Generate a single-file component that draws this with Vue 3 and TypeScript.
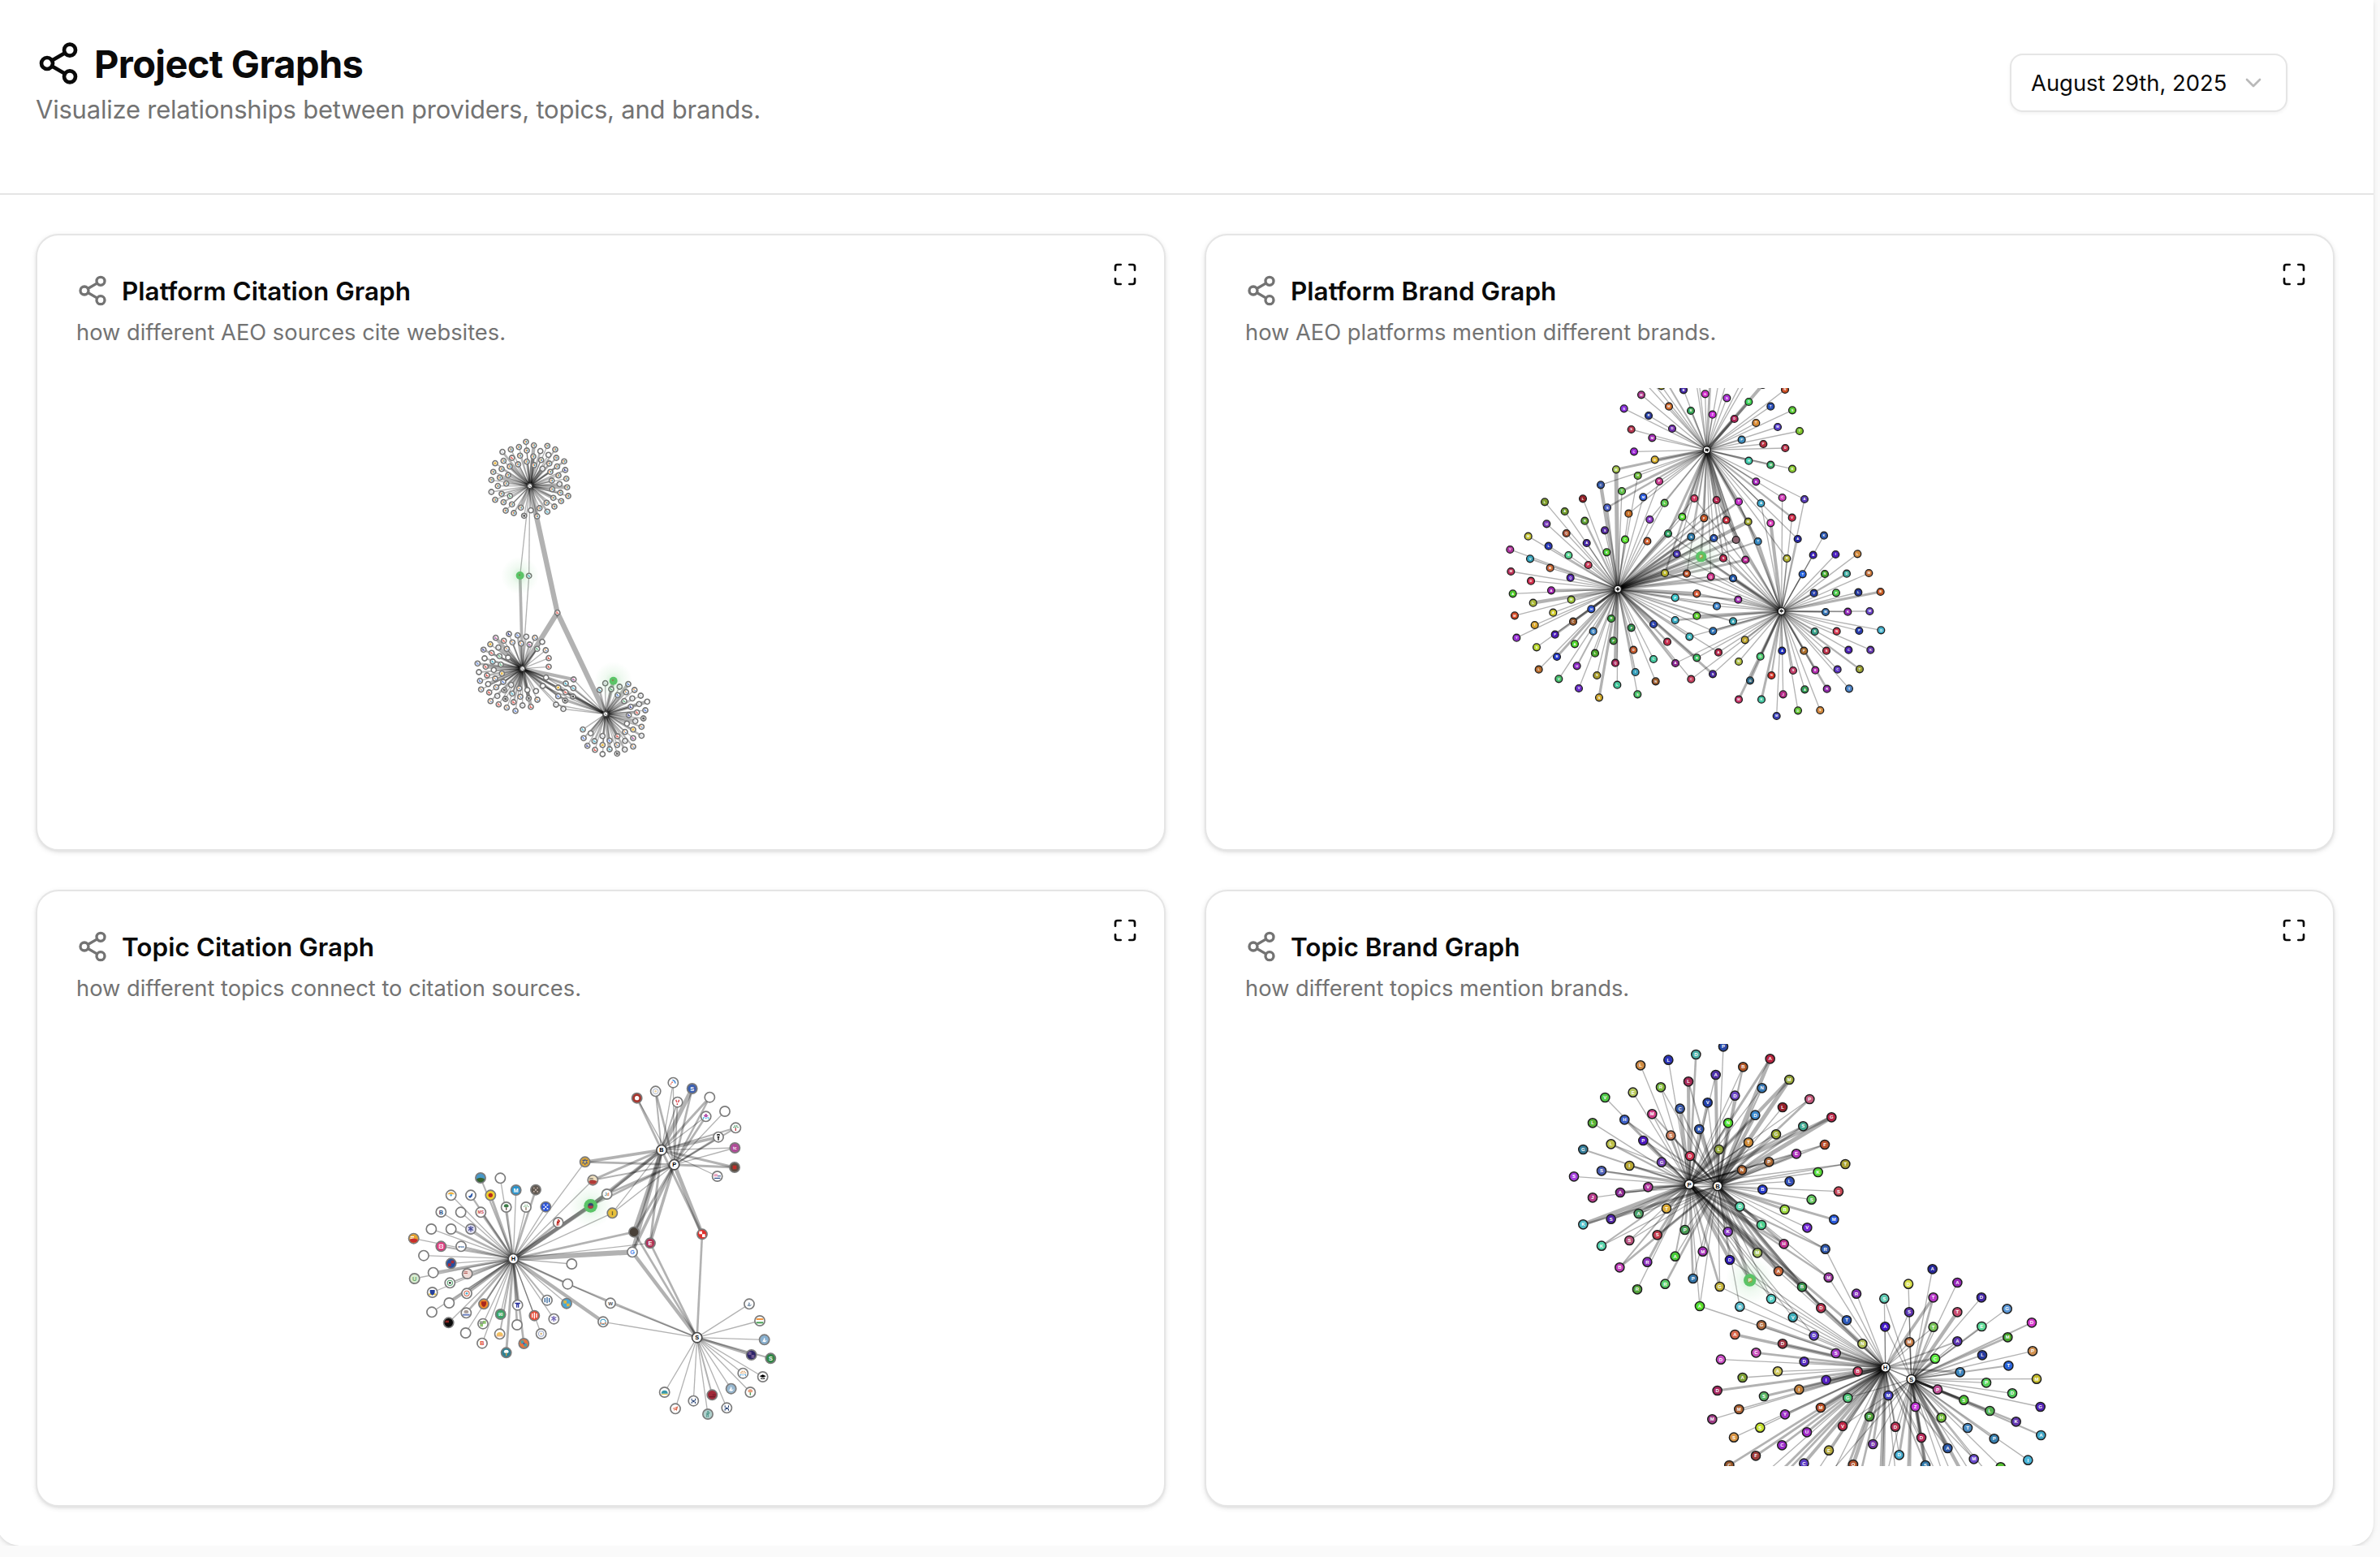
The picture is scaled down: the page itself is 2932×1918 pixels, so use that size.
<script setup lang="ts">
interface Mark {
  d: string
  fill: string
}
interface GraphNode {
  x: number
  y: number
  fill: string
  ink: string
  label: string
  marks: Mark[]
  specks: string[]
  kind: 'hub' | 'leaf' | 'active'
}
interface GraphLink {
  x1: number
  y1: number
  x2: number
  y2: number
  w: number
}
interface Graph {
  id: string
  title: string
  description: string
  offset: [number, number]
  radius: number
  border: number
  ring: string
  font: number
  activeRadius: number
  glow: number
  nodes: GraphNode[]
  links: GraphLink[]
}
type Hubs = Record<string, [number, number]>

// Link spec: hub letter followed by an optional stroke width, e.g. "A8B".
function linksFor(x: number, y: number, spec: string, hubs: Hubs, fallback: number): GraphLink[] {
  return [...spec.matchAll(/([A-Z])(\d*)/g)].map((m) => ({
    x1: hubs[m[1]][0],
    y1: hubs[m[1]][1],
    x2: x,
    y2: y,
    w: m[2] ? Number(m[2]) : fallback,
  }))
}

function rows(raw: string): string[][] {
  return raw.trim().split(/\s+/).map((r) => r.split(','))
}

function leaf(x: number, y: number, extra: Partial<GraphNode>): GraphNode {
  return { x, y, fill: '#fff', ink: '#fff', label: '', marks: [], specks: [], kind: 'leaf', ...extra }
}

/* ---------- platform citations ---------- */
const speckSets: Record<string, string[]> = {
  g: ['#ea6a5e', '#f0c14b', '#4a86f0', '#5fb27a'],
  b: ['#3b66c8', '#8fb0f0', '#5a80d8'],
  r: ['#e23c30', '#d86a60', '#e25048'],
  o: ['#ef8a2c', '#e8d0b8', '#5a8fd8'],
  y: ['#f0b428', '#d8a020', '#e8bc40', '#f0b428'],
  n: ['#23307a', '#4a50a0', '#5058a8'],
  k: ['#333333', '#555555', '#333333', '#444444'],
  t: ['#3aa5c0', '#7cc8dc', '#3aa5c0'],
  p: ['#d0508c', '#5a60b8', '#d0508c'],
  e: ['#3c9c62', '#88cca0', '#5cac7c'],
  w: [],
  s: ['#c8ccd8', '#d8dce0', '#d0d4d8'],
}
const citeHubs: Hubs = { T: [278, 236], L: [251, 911], R: [558, 1079] }
const citeClusters: Record<string, string> = {
  T: `264,73,g 177,110,s 208,101,g 238,92,g 293,86,g 343,88,g 372,101,g 267,105,g 317,107,w 212,132,r 242,124,g 291,127,g 347,121,w 376,132,g
181,143,g 267,146,g 320,140,g 150,152,y 204,164,g 235,156,g 294,159,g 350,153,g 405,145,g 379,164,g 174,173,g 325,172,s 354,184,g 409,177,n
143,184,g 198,196,g 384,197,g 136,214,g 167,205,g 191,227,g 359,216,g 413,209,g 388,229,s 160,236,g 361,248,g 416,241,g 136,258,s 174,265,g
205,273,e 391,261,g 420,273,g 150,287,g 365,280,g 394,292,g 181,296,g 212,304,g 340,298,g 369,312,g 189,327,g 245,316,g 314,318,g 219,336,g
282,326,w 343,331,t 257,346,k 305,348,g`,
  L: `201,783,n 233,788,b 265,793,s 297,797,o 152,797,p 182,808,r 214,814,o 246,818,o 277,822,p 324,812,w 132,821,y 162,833,s 193,838,o 305,838,e
337,843,o 107,841,n 137,853,r 166,865,e 198,870,w 348,872,r 111,873,w 141,885,t 85,892,b 171,896,e 348,904,r 115,904,r 145,916,w 90,924,w
175,929,y 120,936,r 150,948,o 94,956,b 124,968,w 180,960,b 209,971,s 98,988,o 154,980,o 184,991,k 128,999,r 239,984,o 269,990,w 301,994,w
158,1012,s 213,1003,t 188,1023,k 243,1015,o 274,1021,k 306,1026,o 133,1031,o 163,1043,r 218,1035,r 193,1055,o 251,1047,s 282,1052,r 225,1067,b`,
  R: `557,965,s 536,990,t 579,987,e 610,978,s 642,968,b 603,1009,b 634,998,o 665,990,o 627,1031,e 657,1021,s 688,1011,s 712,1033,w 682,1042,s
651,1052,n 705,1065,b 674,1073,r 644,1083,n 698,1095,k 668,1105,s 637,1114,w 691,1126,o 660,1136,y 691,1159,s 630,1145,o 660,1168,p 602,1161,r
630,1178,s 660,1199,o 601,1193,o 629,1210,s 601,1225,k 573,1177,b 573,1209,t 547,1160,s 547,1193,y 547,1227,w 517,1179,t 519,1211,r 491,1196,n
503,1150,w 474,1136,t 477,1168,b`,
}
const citeShared = `440,951,p,L13R 411,966,t,L6R 439,983,t,L6R6 383,981,y,LR6 410,998,r,L9R9 437,1014,k,L7R9 383,1013,b,L6R 409,1029,k,L9R6
375,1044,s,LR 402,1060,s,LR 338,944,w,L7R 326,975,w,L5R5 275,568,t,TL 380,704,r,T19L19R19`

function buildCitation(): Pick<Graph, 'nodes' | 'links'> {
  const nodes: GraphNode[] = []
  const links: GraphLink[] = []
  const widths = [4, 8, 4, 4, 13, 4, 6]
  for (const [hub, raw] of Object.entries(citeClusters)) {
    rows(raw).forEach(([xs, ys, s], i) => {
      links.push(...linksFor(+xs, +ys, hub, citeHubs, widths[i % widths.length]))
      nodes.push(leaf(+xs, +ys, { specks: speckSets[s] }))
    })
  }
  for (const [xs, ys, s, l] of rows(citeShared)) {
    links.push(...linksFor(+xs, +ys, l, citeHubs, 4))
    nodes.push(leaf(+xs, +ys, { specks: speckSets[s] }))
  }
  links.push(...linksFor(242, 567, 'TL11', citeHubs, 4), ...linksFor(587, 956, 'R13', citeHubs, 4))
  for (const [x, y] of Object.values(citeHubs)) nodes.push(leaf(x, y, { specks: ['#999', '#bbb', '#888'], kind: 'hub' }))
  nodes.push(leaf(242, 567, { specks: ['#a04a3c'], kind: 'active' }), leaf(587, 956, { specks: ['#c03a3a'], kind: 'active' }))
  return { nodes, links }
}

/* ---------- brand graphs: coloured discs with an initial ---------- */
function buildBrand(parts: { raw: string; dx: number; dy: number }[], hubs: Hubs, hubLabels: Record<string, string>, hubGlyphs: Record<string, string>) {
  const nodes: GraphNode[] = []
  const links: GraphLink[] = []
  for (const { raw, dx, dy } of parts) {
    for (const [xs, ys, color, label, l] of rows(raw)) {
      const x = +xs + dx
      const y = +ys + dy
      links.push(...linksFor(x, y, l || '', hubs, 4))
      if (color === '-') continue
      const active = color === '*'
      nodes.push(leaf(x, y, { fill: active ? '#b09a3c' : '#' + color, label, kind: active ? 'active' : 'leaf' }))
    }
  }
  for (const [k, [x, y]] of Object.entries(hubs)) {
    nodes.push(leaf(x, y, { ink: '#111', label: hubLabels[k] || '', marks: hubGlyphs[k] ? [{ d: hubGlyphs[k], fill: '#111' }] : [], kind: 'hub' }))
  }
  nodes.sort((a, b) => Number(a.kind === 'active') - Number(b.kind === 'active'))
  return { nodes, links }
}

const platformBrandHubs: Hubs = { A: [788, 283], B: [459, 797], C: [1064, 879] }
const platformBrandRaw = `620,46,a6a82c,,A 702,61,4428a8,B,A 782,76,d02cc8,G,A 862,91,b034d8,S,A 995,42,1f2a78,,A12 1077,60,cc4e24,N,A
546,79,b03a90,M,A 648,122,cf6a2c,M,A 729,138,38a858,B,A6 809,152,c82cd8,Z,A 943,105,3ccf54,D,A9 890,168,b02458,D,A9 1024,122,2850b8,T,A
1104,136,58c832,S,A 482,130,8a32dc,S,A 573,156,283ca0,R,A 660,204,7430b0,D,A 970,183,d88a34,T,A 1050,198,5a3ed0,M,A 1131,213,7cc42c,T,A
509,207,b83450,S,A 586,238,a22cb4,M,A 917,245,3c8cbc,P,A 997,261,b43040,F,A 1078,276,b83048,D,A 519,289,9a24d4,C,A 596,319,d8b02c,D,A9
943,323,3cc8a8,H,A 1024,338,3cb06c,M,A6 1104,353,8ccc34,E,A 453,355,a4c44c,M,A9B15 533,378,68b434,H,AB 612,399,cc3c90,F,AB
396,412,3458a8,C,AB13 474,435,62c04c,T,A9B 553,457,2c5ce0,M,AB 632,479,5cc84c,L,AB 420,496,4c60c4,S,A7B6 499,518,c46c24,I,AB 577,540,8a38c8,K,AB
970,400,a424b8,K,A 1067,459,d03cb8,C,AC 1149,465,5a3cb8,A,AC 988,480,3ca4c8,A,AC 1103,533,cc2848,V,A7C 1024,553,d83cbc,E,AC12
742,462,d43860,T,A7BC 824,468,b42850,L,A13BC 906,474,c42cc8,T,A9B8C 697,530,52d82c,M,A9BC 778,535,c45828,F,AB6 860,542,c42c3c,A,A14B7C
941,548,9ca42c,M,A6B13C6 645,592,2c9c5c,R,A9B13C 730,604,2c78a8,S,AB9 814,609,2850b0,K,AB6C 896,615,8c6470,,A13B11C6 977,621,3484bc,T,A9B6C8
1124,612,2828a8,A,AC 1221,599,2c58b0,K,C 189,475,7c9c2c,L,B 330,463,942028,L,B 263,510,6c982c,A,B 337,545,5c9c30,R,B7 411,580,5428a0,S,B
196,556,7838b8,U,B 269,591,a85030,Q,B 486,614,58e02c,C,B 568,620,cc5c2c,A,B 128,602,c4c434,M,B 203,638,2838b8,L,B 344,627,4828a4,A,B
418,661,48c82c,K,B 277,672,54d490,E,B 61,651,b034a0,V,B 135,685,34a4bc,V,B6 350,708,c83c58,F,B 209,719,cc6838,B,B 284,755,5424b4,Q,B
64,732,bc3058,M,B 138,767,d42c4c,D,B 213,802,a024b0,A,B9 71,814,4cc82c,A,B 146,848,a8b838,L,B13 287,836,9cc438,M,B 78,895,d44c28,M,B
220,884,ccc82c,A,B 361,871,2c50cc,H,B9 294,917,98582c,C,B9 152,930,d8a42c,T,B 227,965,4c1cb8,P,B9 85,977,9830d4,Y,B 159,1012,b8d82c,S,B
368,953,3c84c4,Q,B6 300,1000,50d82c,A,B6 234,1047,2438cc,B,B9 167,1094,b86c2c,L,B 375,1034,48a828,L,B 308,1081,8c28c4,U,B6 241,1129,48c06c,V,B
382,1116,a89c2c,S,B 315,1164,6c2ccc,V,B 390,1198,d0a82c,S,B10 435,906,3ca03c,R,B 443,988,40983c,P,B6 450,1070,a82458,Q,B13 457,1151,40c498,L,B
509,940,349050,F,B 517,1022,c0582c,D,B 524,1104,349cb8,I,B6 532,1186,48c064,S,B 591,927,2c44b0,L,B6 591,1056,44c8a0,C,B 599,1138,985828,N,B
642,992,c42c4c,T,B7 724,973,3cb4bc,K,B6C 672,1071,8c2890,A,B8C 751,1051,38b85c,R,B7C 730,1130,c43c5c,C,BC 810,1111,4828a0,S,B9C
831,1031,b42848,A,BC 671,829,3cc8cc,P,B6C 751,814,d85c38,A,B13C6 825,860,3c84cc,D,B6C 904,836,9c2cac,M,B6C6 751,896,5ccc2c,S,B6C9
671,912,34a8c0,M,BC7 885,916,34a0b0,A,B6C 811,952,2c70b4,P,BC9 677,667,4430b0,D,AB14C 849,683,bc2850,S,A6B13C 931,689,b42490,H,AB9
633,738,b8b42c,S,A7B15C 714,740,b84c24,M,AB9C 803,751,d0308c,Q,AB7C 885,757,2458a8,A,AB9C14 929,985,bca42c,J,C6 906,1065,b0c044,N,C
986,1046,48c870,G,C8 948,1135,2c6480,G,C8 906,1205,c83468,M,C9 990,1205,44c8a4,K,C9 1027,1116,d03028,N,C6 1066,1025,1c2cb8,A,C 1070,1186,b42c88,J,C
1046,1266,3c40b8,M,C 1107,1098,c03c68,S,C6 1147,1025,a86c2c,P,C 1150,1168,349c54,A,C 1125,1246,64c434,D,C 1207,1245,d4883c,S,C
1189,1097,b02cac,E,C6 1232,1166,9028a8,R,C8 1230,1025,bc3048,S,C 1271,1094,5c34c0,C,C 1314,1165,4c84c8,T,C 1312,1022,4c20b4,C,C
1353,1093,98a034,T,C7 1393,1022,6438b0,K,C 1187,954,349c84,S,C 1268,953,d43850,N,C 1351,951,283cb0,P,C 1432,949,44b4d0,D,C
1227,882,3470b0,M,C6 1309,881,9028b4,K,C 1390,879,6844c8,M,C 1184,812,2840a8,V,C 1266,811,4cc84c,F,C 1348,809,28389c,L,C 1430,807,c45824,B,C9
1142,742,2864dc,T,C 1224,741,44a82c,N,C 1305,740,3ca89c,D,C7 1387,738,c8743c,M,C 1181,671,3c20b4,A,C 1264,669,4c20c0,I,C 1345,667,d0883c,L,C
1084,684,b0b034,R,AC 767,677,*,P,A8B9C9
545,20,-,,A 577,20,-,,A 632,20,-,,A6 747,20,-,,A 758,20,-,,A 801,20,-,,A9 834,20,-,,A 864,20,-,,A 922,20,-,,A 940,20,-,,A`

const topicBrandHubs: Hubs = { P: [483, 567], B: [588, 573], H: [1208, 1244], S: [1304, 1287] }
const topicBrandUpper = `303,127,d08c44,L,P 406,107,2c34b8,L,P 508,87,4cb0a8,D,P8 609,58,2848a8,P,B 682,133,b05424,B,B7P 782,103,b82440,A,B14P9 853,180,98a83c,M,B15P13
275,227,b4c85c,E,P 378,208,7cb83c,R,PB 480,187,a82c58,L,P12B6 581,162,5030a8,A,B12P 172,246,50cc48,V,P 244,328,3c60c8,H,P6B6 346,307,d03c88,M,B6P
449,287,3858a8,C,P13B6 551,265,2440a8,V,BP9 652,239,6c48c4,D,B6P 752,211,3878b4,N,B6P 928,252,c4587c,P,B8P 828,282,98202c,L,B 727,311,3c88cc,D,B13P
627,340,50e02c,N,B9P 126,340,58b438,L,P 313,405,4c18c0,P,P9B 415,386,c87c58,S,P6B7 520,363,2c50a8,K,PB12 1009,319,b82448,G,B16P12 904,352,40a890,S,B8P8
804,382,98a830,G,B6P 702,412,d08c38,T,B14P 593,438,90a43c,L,B9P9 91,438,347c98,G,P6 194,418,bcc048,L,P7B 381,485,7440b8,G,B6P 486,462,cc3050,D,B9P
984,420,b8502c,F,B7P 879,454,b034bc,E,B9P 778,484,a86838,P,B9P 678,514,a86030,N,B6P9 1060,492,a8a030,T,BP 262,498,b8a834,I,P6B 159,517,4c60b8,S,P7B
57,538,a43cdc,S,P 959,522,58dc38,K,B 854,556,3450b8,L,B 754,586,2438c8,B,B 1035,593,c84858,S,B 331,577,b0389c,V,P8B 228,597,8c2c94,A,P9B
126,616,b83c8c,J,P 935,623,60c45c,S,B 836,660,9cd83c,B,B9 670,649,54d4a8,D,B9P 399,656,dcac38,T,P9B 296,675,4ca068,A,P13B 194,695,5024a8,S,P12B7
91,715,50c0c8,K,P15B7 1018,697,2858dc,M,B9 919,727,7428d4,V,B 750,717,4cd090,L,B9P 467,735,489c54,P,P8B 365,754,c03c4c,S,P9B7 262,774,b8507c,S,PB
159,794,54d4ac,K,P6B 626,742,8c3cc8,K,PB6 833,787,c03090,H,P9B9 986,806,3058ac,R,BP7H 735,820,a4c05c,M,B9P12 533,815,a02cb4,M,PB 431,833,48cc38,A,P6B
328,854,8c30bc,R,P9 226,874,c03cb8,B,P6B8 633,846,2c14b4,D,P13BH 813,888,c8683c,A,P13B9H 998,911,9838a0,M,P7BH 497,915,3474a8,P,P8B 394,935,58cc68,R,B8
291,955,54a43c,R,P 900,946,389850,B,B15P9H6 596,945,c4b43c,G,P8BH 786,990,50ccc4,P,BPH 522,1017,54e02c,A,PBH 670,1019,58bccc,B,BH 707,921,*,P,B13P9H`
const topicBrandLower = `621,191,8430b8,R,H 490,244,b83050,D,HB9 585,289,2c58b8,T,HP9 643,376,b0c058,N,H8P9 386,278,3cacb8,V,HP
464,346,6040c8,D,HP 270,307,b06c40,G,H9 172,342,d8684c,A,H11 348,376,a03444,D,H9 250,409,c850bc,C,H8 120,434,c84cc4,D,H 545,411,a840cc,S,H8
428,442,5428bc,D,H7 330,478,ccc458,A,H 200,501,7ca034,A,H 107,549,a82860,D,H9 626,478,c83c60,B,H6 509,510,5420c0,I,H14 409,545,c0803c,I,H14
279,570,58b464,S,H9 187,618,b06434,M,H 88,655,a03c88,M,H 589,576,50c878,G,HS 489,612,b84c24,M,H13 357,637,a034c8,Y,H6 265,686,c4e02c,S,H 168,722,d89444,S,H
570,680,c02848,V,H13S 438,703,a028c8,U,H9 346,751,9828c8,C,H8 249,790,a03c3c,F,H9 151,825,98582c,C,H8 669,645,489c3c,P,H6S8 519,770,b4a83c,E,H8
427,818,5c3cc4,C,H12 682,747,7434a8,D,H9S 609,822,b0502c,O,H14 739,567,4440c0,M,HS 765,683,b83454,D,H6S 779,787,44acd0,D,HS9
839,609,c438d8,Z,HS 861,723,b8285c,D,HS9 876,825,3478a8,S,S14H6 921,545,c05098,P,S9H 1018,584,50c438,S,S9H 1114,624,54b454,L,S9 1211,664,6438b0,K,S7 1303,714,40a8c8,A,S6
935,649,6cb838,H,S9 1032,687,4c8cc4,T,S8 1130,727,3880b0,P,S6 1255,806,48b4d8,I,S 958,762,2c58a8,A,S13H6 1055,802,6c4cd0,M,SH 1154,832,54c030,,S
1004,481,3c84bc,T,SH8 1101,520,58d45c,P,S 1197,559,4cc858,D,S 1301,609,5424b8,G,S 1086,418,283ca0,L,S6 1183,457,2864dc,T,S6 1287,506,c4bc2c,M,S
1180,352,48a82c,M,S8 1272,403,d09050,P,S 1084,312,5cdc98,E,S6 1269,298,d438cc,D,S6 1178,247,5c98d8,G,S 994,367,5c34b0,A,SH6 912,431,5cec40,C,H9S8
817,370,c07848,M,HS 727,313,4418c8,A,HS 905,314,78c458,T,HS6 994,259,c84c70,T,S13 1083,205,4428a8,D,S 905,205,b838c8,T,H11S8 816,259,5c34b0,S,HS
724,209,5cc8b0,S,HS 813,155,d8e04c,D,S 902,100,28289c,A,S 994,150,9828b8,A,S
300,840,-,,H 348,840,-,,H9 372,840,-,,H8 480,840,-,,H 540,840,-,,H 585,840,-,,H9 640,840,-,,H8 712,850,-,,H12 722,850,-,,H9 765,850,-,,H 735,850,-,,S
812,850,-,,S9 820,850,-,,S6 910,840,-,,H 935,840,-,,S 965,840,-,,S 1010,850,-,,S13 1035,840,-,,S 1090,835,-,,S 535,840,-,,S 880,850,-,,S8`

/* ---------- topic citations: favicons in a ring ---------- */
const glyphs: Record<string, string> = {
  disc: 'M-8,0a8,8 0 1 0 16,0a8,8 0 1 0 -16,0',
  dot: 'M-4,0a4,4 0 1 0 8,0a4,4 0 1 0 -8,0',
  half: 'M-15,4q14,-9 30,0a15.5,15.5 0 0 1 -30,0',
  top: 'M-13,-3a14,14 0 0 1 26,0z',
  dome: 'M-12,5a12,12 0 0 1 24,0z',
  base: 'M-12,6h24v3h-24z',
  quad: 'M-11,-11h11v11h-11zM0,0h11v11h-11z',
  quadb: 'M0,-11h11v11h-11zM-11,0h11v11h-11z',
  crown: 'M-9,-2a9,9 0 0 1 18,0l-4,3h-10z',
  trunk: 'M-2,1h4v10h-4z',
  dots: 'M-9,-4h4v4h-4zM-5,-9h4v4h-4zM2,-9h4v4h-4zM6,-4h4v4h-4zM-2,-3h4v4h-4z',
  bars: 'M-10,-8h4v16h-4zM-2,-11h4v22h-4zM6,-8h4v16h-4z',
  bang: 'M-7,-9h4v6h-4zM3,-9h4v6h-4zM-5,-3h4v4h-4zM1,-3h4v4h-4zM-3,5h4v5h-4z',
  arc: 'M-3,-12q13,2 13,15l-4,0q-1,-9 -9,-11z',
  peak: 'M-11,8l7,-13l4,4l-2,2l-2,-2l-5,10z',
  person: 'M-2,-12h5v6h-5zM-5,-5h8l4,-5v6l-4,5v10h-3v-8h-2v8h-4z',
  grid: 'M-9,-9h5v5h-5zM4,-9h5v5h-5zM-3,-3h6v6h-6zM-9,4h5v5h-5zM4,4h5v5h-5z',
  feet: 'M-11,3h6v3h-3v4h-3zM11,3h-6v3h3v4h3zM-3,5h6v3h-6z',
  star: 'M-3,-10h6v5h5v5h-4v3h-8v-3h-4v-5h5z',
  bird: 'M-10,4l8,-3l6,-9l3,2l-2,10l-8,7z',
  plane: 'M-11,-1l21,-8l-5,17l-6,-5l-4,6v-8zM-6,-1l4,2l8,-6z',
  box: 'M-7,-7h14v14h-14z',
  shield: 'M-9,-9h18v9q-1,8 -9,11q-8,-3 -9,-11z',
  cap: 'M-12,-2l12,-6l12,6l-12,5zM-7,3q7,6 14,0v5h-14z',
  tee: 'M-10,-9h20v5h-5v13h-4v-10h-2v10h-4v-13h-5z',
  torch: 'M-5,-11h10v6h-3v-2h-4v2h-3zM-4,-3h8v5h-2v10h-4v-10h-2z',
  ring: 'M-11,0a11,11 0 1 0 22,0a11,11 0 1 0 -22,0M-8,0a8,8 0 1 1 16,0a8,8 0 1 1 -16,0',
  burst: 'M-2,-11h4v7l6,-5l2,4l-7,4l7,4l-3,4l-5,-5v8h-4v-8l-6,5l-2,-4l6,-4l-6,-4l3,-4l5,4z',
  flag: 'M-13,-9h26v6h-26z',
  foot: 'M-13,4h26v6h-26z',
  stripes: 'M-12,-8h13v3h-13zM-13,-3h14v3h-14z',
  lines: 'M1,-2h12v3h-12zM-11,5h22v4h-22z',
  wave: 'M-9,6q6,-2 8,-14l4,6l-2,5q5,2 8,-3q-1,9 -9,9z',
  cam: 'M-8,-8h16v16h-16zM-5,-5v10h10v-10zM-2,-2h4v4h-4z',
  aitch: 'M-8,-9h3v7h10v-7h3v7l-3,2h-2v3h5v7h-3v-5h-10v5h-3v-7h5v-3h-2l-3,-2z',
}
const topicCiteHubs: Hubs = { H: [427, 722], B: [975, 320], P: [1022, 374], S: [1106, 1013] }
// x, y, background, ink(s), glyph name(s) or =text, links
const topicCiteRaw = `884,128,a8342c,fff,disc,B8P 953,103,fff,b4bccc+e8d0a0,ring+dot,B6P8 1018,71,fff,4a8cd8+e05040,arc+peak,BP 1088,93,3c60b0,fff,=S,B16P8 1034,143,fff,d83840,bang,B6P6 1153,125,fff,fff,,B9P7
1139,196,fff,b048a8+48b8e8,star+feet,BP8 1209,177,fff,fff,,P 1249,238,fff,3c8c58+d03848,dots+trunk,B6P6 1185,272,fff,111,torch,B11P7 1246,312,b04c98,fff,=tc,BP
1245,384,5c4c40,c02c28,box,B9P9 1181,417,fff,e0709c+30508c,stripes+lines,B 692,364,e0a834,2c4c98+e8c860,burst+dot,B11P8H 721,431,f0e0c0,b03c38+807868,half+stripes,B9P6H 773,483,fff,e87830,=Jd,B9P8H13
793,553,e8c03c,4c4830,=i,BPH 593,588,fff,c02820,person,H8 873,623,484038,c0a048,,B15P9H8S8 933,664,b03458,fff,=E,B9P11HS8
867,697,fff,4480e8,=G,B15P11H19S13 1125,631,e0302c,fff,quad,P15B9S8 643,741,fff,fff,,H 628,815,fff,fff,,H8S6 786,886,fff,555,=w,HS
759,955,fff,3c98c0+e08050,ring+feet,H13S 306,423,4898c8,38602c,half,H6 379,424,fff,fff,,H 437,468,2c94cc,fff,=M,H 510,467,605850,c0b0a8,grid,H8
197,487,fff,f0b440+60b0e0,top+dot,H 270,487,fff,2c58a8,bird,H7 343,487,f0d02c,b82c20,disc,H9 401,531,fff,3c7c48+604840,crown+trunk,H7 474,531,fff,80b888+907860,dots+trunk,H 547,530,2c54d8,fff,grid,H
160,549,fff,284c80,=B,H 233,550,fff,fff,,H 307,550,fff,c84040,=MS,H9 270,612,e0e0f0,484c98,burst,H7 124,612,fff,fff,,H 197,612,fff,fff,,H8
59,647,e8a430,fff+c82c2c,stripes+half,H 160,676,e03c80,fff,cam,H6 234,676,fff,204880,=arcs,H6 96,710,fff,fff,,H 197,739,2450a0,a82c38,quadb,H 131,773,fff,fff,,H9
257,777,f0dcd8,b86460,stripes,H8 62,795,d8ecd0,68a868,=U,H 193,811,fff,50a068+303030,ring+dot,H6 128,846,fff,e0c040+24409c,foot+shield,H 255,850,fff,d06048+48a8c8,ring+dot,H11
190,885,fff,fff,,H9 126,919,fff,fff,,H 188,958,0c0c0c,b82c28,stripes,H 318,889,f08828,a82820,shield,H6 253,922,fff,a89c98+6c80c0,crown+foot,H8 380,927,3ca468,fff,=90,H
443,893,fff,2c34a0,tee,H9 552,875,fff,2c6098,bars,H6 624,887,48a8d8,e0b440,quad,H 505,932,e84c38,fff,bars,H 577,944,fff,7468b8,burst,H
315,962,fff,90c870+506048,quadb+stripes,H 441,966,fff,fff,,H8 251,996,fff,fff,,H 377,1000,fff,f0c060+e88c3c,dome+base,H6 530,999,fff,9ca8c8+d8b880,ring+dot,H 312,1034,fff,e04830,=B,H
466,1035,e8743c,48a0a8+6050a0,quad+dot,H8 401,1069,2c8094,fff+e0a040,crown+trunk,H9 1299,889,fff,8098b0,wave,S 1338,951,fff,ef9440+48a054,flag+foot,S 1355,1021,88b0d0,fff,wave,S
1307,1077,2c2468,705890,quad,S10 1378,1090,308848,fff,=S,S6 1276,1145,fff,d89048+60a8d8,dots+feet,S 1349,1158,fff,000,cap,S 1303,1215,fff,e8a080+4c9c50,crown+trunk,S 1232,1202,98b8d0,fff,wave,S
986,1215,fff,3898a8+e0c850,dome+base,S 1026,1276,fff,e0684c,plane,S 1093,1247,fff,203c70,aitch,S 1162,1225,a02838,701828,lines,S6 1216,1273,fff,203c70,aitch,S
1146,1296,b0d0cc,589c90,person,S 713,526,*,28407c+b03848,top+half,H15B13P8`

function buildTopicCitation(): Pick<Graph, 'nodes' | 'links'> {
  const nodes: GraphNode[] = []
  const links: GraphLink[] = []
  for (const [xs, ys, bg, ink, mark, l] of rows(topicCiteRaw)) {
    const inks = ink.split('+').map((c) => '#' + c)
    links.push(...linksFor(+xs, +ys, l, topicCiteHubs, 4))
    nodes.push(
      leaf(+xs, +ys, {
        fill: bg === '*' ? '#4c5c58' : '#' + bg,
        ink: inks[0],
        label: mark.startsWith('=') ? mark.slice(1) : '',
        marks: mark && !mark.startsWith('=') ? mark.split('+').map((m, i) => ({ d: glyphs[m], fill: inks[i] })) : [],
        kind: bg === '*' ? 'active' : 'leaf',
      }),
    )
  }
  for (const [k, [x, y]] of Object.entries(topicCiteHubs)) nodes.push(leaf(x, y, { ink: '#000', label: k, kind: 'hub' }))
  return { nodes, links }
}

const graphs: Graph[] = [
  {
    id: 'platform-citation', title: 'Platform Citation Graph', description: 'how different AEO sources cite websites.',
    offset: [466, 42], radius: 9.3, border: 4.8, ring: '#757575', font: 8, activeRadius: 15, glow: 70, ...buildCitation(),
  },
  {
    id: 'platform-brand', title: 'Platform Brand Graph', description: 'how AEO platforms mention different brands.',
    offset: [306, -18], radius: 13.2, border: 4, ring: '#1e1e1e', font: 12, activeRadius: 20, glow: 80,
    ...buildBrand([{ raw: platformBrandRaw, dx: 0, dy: 0 }], platformBrandHubs, {}, {
      A: 'M-7,0l4,-7l3,4l5,-3l2,7l-5,6l-3,-4l-4,2z', B: 'M-9,0l6,-3l3,-6l3,6l6,3l-6,3l-3,6l-3,-6z', C: 'M-6,-6l5,3v-6h2v6l5,-3v10l-5,-3v6h-2v-6l-5,3z',
    }),
  },
  {
    id: 'topic-citation', title: 'Topic Citation Graph', description: 'how different topics connect to citation sources.',
    offset: [396, 24], radius: 18.4, border: 5, ring: '#7b7b7b', font: 17, activeRadius: 25, glow: 82, ...buildTopicCitation(),
  },
  {
    id: 'topic-brand', title: 'Topic Brand Graph', description: 'how different topics mention brands.',
    offset: [386, -16], radius: 16.8, border: 4.4, ring: '#1e1e1e', font: 18, activeRadius: 23, glow: 90,
    ...buildBrand(
      [{ raw: topicBrandUpper, dx: 0, dy: 0 }, { raw: topicBrandLower, dx: 480, dy: 780 }],
      topicBrandHubs, { P: 'P', B: 'B', H: 'H', S: 'S' }, {},
    ),
  },
]

const speckSpots: [number, number][] = [[-4, -4], [-4, 0], [0, 0], [0, -4]]

function ringColor(g: Graph, n: GraphNode): string {
  if (n.kind !== 'hub') return g.ring
  return g.id === 'topic-citation' || g.id === 'platform-citation' ? '#484848' : '#161616'
}
function labelSize(g: Graph, n: GraphNode): number {
  if (n.kind === 'hub') return g.font * 1.3
  return n.label.length > 2 ? 11 : n.label.length > 1 ? 15 : g.id === 'topic-citation' ? 22 : g.font
}
</script>

<template>
  <div class="panel">
    <header class="page-header">
      <div class="heading">
        <div class="heading-row">
          <svg class="icon-lg" viewBox="0 0 24 24"><circle cx="18" cy="5" r="3" /><circle cx="6" cy="12" r="3" /><circle cx="18" cy="19" r="3" /><path d="M8.59 13.51l6.83 3.98M15.41 6.51l-6.82 3.98" /></svg>
          <h1>Project Graphs</h1>
        </div>
        <p class="subtitle">Visualize relationships between providers, topics, and brands.</p>
      </div>
      <button class="date-select" type="button">
        <span>August 29th, 2025</span>
        <svg class="chevron" viewBox="0 0 24 24"><path d="m6 9 6 6 6-6" /></svg>
      </button>
    </header>
    <main class="grid">
      <section v-for="g in graphs" :key="g.id" class="card">
        <div class="card-head">
          <div class="card-text">
            <div class="card-title-row">
              <svg class="icon-md" viewBox="0 0 24 24"><circle cx="18" cy="5" r="3" /><circle cx="6" cy="12" r="3" /><circle cx="18" cy="19" r="3" /><path d="M8.59 13.51l6.83 3.98M15.41 6.51l-6.82 3.98" /></svg>
              <h2>{{ g.title }}</h2>
            </div>
            <p class="card-desc">{{ g.description }}</p>
          </div>
          <button class="expand" type="button" aria-label="Expand graph">
            <svg viewBox="0 0 24 24"><path d="M8 3H5a2 2 0 0 0-2 2v3M21 8V5a2 2 0 0 0-2-2h-3M3 16v3a2 2 0 0 0 2 2h3M16 21h3a2 2 0 0 0 2-2v-3" /></svg>
          </button>
        </div>
        <svg class="canvas" width="1292" height="520" viewBox="0 0 1292 520">
          <defs>
            <radialGradient :id="'glow-' + g.id">
              <stop offset="0" stop-color="#4fc15f" stop-opacity="0.28" />
              <stop offset="0.45" stop-color="#4fc15f" stop-opacity="0.09" />
              <stop offset="1" stop-color="#4fc15f" stop-opacity="0" />
            </radialGradient>
          </defs>
          <g :transform="`translate(${g.offset[0]} ${g.offset[1]}) scale(0.33333)`">
            <line v-for="(l, i) in g.links" :key="'l' + i" class="link" :x1="l.x1" :y1="l.y1" :x2="l.x2" :y2="l.y2" :stroke-width="l.w" />
            <g v-for="(n, i) in g.nodes" :key="'n' + i" :transform="`translate(${n.x} ${n.y})`">
              <template v-if="n.kind === 'active'">
                <circle :r="g.glow" :fill="`url(#glow-${g.id})`" />
                <circle :r="g.activeRadius" fill="#5ac467" />
                <circle v-if="!n.specks.length" :r="g.activeRadius * 0.42" :fill="n.fill" :opacity="g.id === 'topic-citation' ? 1 : 0.65" />
              </template>
              <circle v-else :r="g.radius" :fill="n.fill" :stroke="ringColor(g, n)" :stroke-width="g.border" />
              <rect v-for="(s, k) in n.specks" :key="k" :x="speckSpots[k][0]" :y="speckSpots[k][1]" width="4" height="4" :fill="s" />
              <path v-for="(m, k) in n.marks" :key="'m' + k" :d="m.d" :fill="m.fill" fill-rule="evenodd" :transform="n.kind === 'active' ? 'scale(0.7)' : ''" />
              <text v-if="n.label" class="initial" :font-size="labelSize(g, n)" :y="labelSize(g, n) * 0.35" :fill="n.ink">
                <template v-if="n.label === 'Jd'"><tspan fill="#4a90c8">J</tspan>d</template>
                <template v-else>{{ n.label }}</template>
              </text>
            </g>
          </g>
        </svg>
      </section>
    </main>
  </div>
</template>

<style>
html,
body {
  background: #fafafa;
  overflow: hidden;
}
</style>

<style scoped>
.panel {
  box-sizing: border-box;
  width: 2928px;
  height: 1904px;
  margin-left: -4px;
  background: #fff;
  border-radius: 0 0 28px 28px;
  box-shadow: 0 2px 6px rgba(0, 0, 0, 0.1), 0 2px 4px -2px rgba(0, 0, 0, 0.1);
  font-family: Inter, 'Liberation Sans', sans-serif;
  color: #0a0a0a;
}
h1,
h2,
p {
  margin: 0;
}
svg {
  display: block;
}
.icon-lg,
.icon-md,
.chevron,
.expand svg {
  fill: none;
  stroke: currentColor;
  stroke-width: 2;
  stroke-linecap: round;
  stroke-linejoin: round;
  flex: none;
}
.page-header {
  box-sizing: border-box;
  height: 240px;
  padding: 46px 106px 0 48px;
  border-bottom: 2px solid #e5e5e5;
  display: flex;
  justify-content: space-between;
  align-items: flex-start;
}
.heading-row {
  display: flex;
  align-items: center;
  gap: 16px;
  height: 64px;
}
.icon-lg {
  width: 56px;
  height: 56px;
}
h1 {
  padding-top: 2px;
  font-size: 47px;
  line-height: 64px;
  font-weight: 700;
  letter-spacing: -0.65px;
}
.subtitle {
  padding-top: 1px;
  font-size: 31px;
  line-height: 48px;
  letter-spacing: -0.22px;
  color: #737373;
}
.date-select {
  box-sizing: border-box;
  width: 342px;
  height: 72px;
  margin-top: 20px;
  padding: 0 24px;
  display: flex;
  align-items: center;
  justify-content: space-between;
  border: 2px solid #e5e5e5;
  border-radius: 16px;
  background: #fff;
  box-shadow: 0 2px 4px rgba(0, 0, 0, 0.05);
  font-family: inherit;
  font-size: 27.4px;
  color: #0a0a0a;
  white-space: nowrap;
}
.chevron {
  width: 32px;
  height: 32px;
  color: #b9b9b9;
}
.grid {
  display: grid;
  grid-template-columns: 1392px 1392px;
  gap: 48px;
  padding: 48px;
}
.card {
  box-sizing: border-box;
  height: 760px;
  padding: 48px;
  border: 2px solid #e5e5e5;
  border-radius: 28px;
  background: #fff;
  box-shadow: 0 2px 6px rgba(0, 0, 0, 0.1), 0 2px 4px -2px rgba(0, 0, 0, 0.1);
}
.card-head {
  height: 140px;
  display: flex;
  justify-content: space-between;
  align-items: flex-start;
}
.card-title-row {
  display: flex;
  align-items: center;
  gap: 16px;
  height: 40px;
}
.icon-md {
  width: 40px;
  height: 40px;
  color: #737373;
}
h2 {
  padding-top: 2px;
  font-size: 31.5px;
  line-height: 40px;
  font-weight: 600;
}
.card-desc {
  margin-top: 12px;
  font-size: 27.3px;
  line-height: 40px;
  color: #737373;
}
.expand {
  margin: -16px -16px 0 0;
  padding: 0;
  border: 0;
  background: none;
  color: #0a0a0a;
}
.expand svg {
  width: 32px;
  height: 32px;
}
.canvas {
  overflow: hidden;
}
.link {
  stroke: #000;
  stroke-opacity: 0.3;
}
.initial {
  font-family: 'Liberation Sans', Arial, sans-serif;
  font-weight: 700;
  text-anchor: middle;
}
</style>
